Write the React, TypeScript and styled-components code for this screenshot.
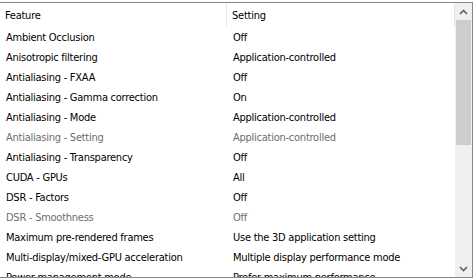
import React from "react";
import styled, { createGlobalStyle } from "styled-components";

const Global = createGlobalStyle`
  html, body { margin: 0; padding: 0; background: #ffffff; }
  body { width: 474px; height: 280px; overflow: hidden; }
`;

const Frame = styled.div`
  box-sizing: border-box;
  width: 474px;
  height: 276px;
  margin: 2px 0 0 -1px;
  border: 1px solid #828790;
  background: #ffffff;
  display: flex;
  overflow: hidden;
  font-family: "DejaVu Sans Condensed", "DejaVu Sans", sans-serif;
  font-stretch: condensed;
  font-size: 11px;
  letter-spacing: -0.25px;
  color: #000000;
`;

const ListArea = styled.div`
  flex: 1;
  display: flex;
  flex-direction: column;
  overflow: hidden;
`;

const HeaderRow = styled.div`
  display: grid;
  grid-template-columns: 227px 228px;
  height: 24px;
  flex-shrink: 0;
`;

const HeaderCell = styled.div`
  display: flex;
  align-items: center;
  padding-left: ${(p: { $pad: number }) => p.$pad}px;
  border-right: 1px solid #e5e5e5;
  margin: 1px 0;
`;

const Row = styled.div`
  display: grid;
  grid-template-columns: 227px 228px;
  height: 20px;
  flex-shrink: 0;
  color: ${(p: { $disabled?: boolean }) => (p.$disabled ? "#6d6d6d" : "#000000")};
`;

const Cell = styled.div`
  display: flex;
  align-items: center;
  padding-left: ${(p: { $pad: number }) => p.$pad}px;
  white-space: nowrap;
`;

const ScrollBar = styled.div`
  width: 17px;
  flex-shrink: 0;
  background: #f0f0f0;
  display: flex;
  flex-direction: column;
`;

const ArrowButton = styled.div`
  height: 17px;
  display: flex;
  align-items: center;
  justify-content: center;
  flex-shrink: 0;
`;

const Track = styled.div`
  flex: 1;
  display: flex;
  flex-direction: column;
  padding: 0 1px;
`;

const Thumb = styled.div`
  height: 125px;
  background: #cdcdcd;
`;

const rows: { f: string; s: string; d?: boolean }[] = [
  { f: "Ambient Occlusion", s: "Off" },
  { f: "Anisotropic filtering", s: "Application-controlled" },
  { f: "Antialiasing - FXAA", s: "Off" },
  { f: "Antialiasing - Gamma correction", s: "On" },
  { f: "Antialiasing - Mode", s: "Application-controlled" },
  { f: "Antialiasing - Setting", s: "Application-controlled", d: true },
  { f: "Antialiasing - Transparency", s: "Off" },
  { f: "CUDA - GPUs", s: "All" },
  { f: "DSR - Factors", s: "Off" },
  { f: "DSR - Smoothness", s: "Off", d: true },
  { f: "Maximum pre-rendered frames", s: "Use the 3D application setting" },
  { f: "Multi-display/mixed-GPU acceleration", s: "Multiple display performance mode" },
  { f: "Power management mode", s: "Prefer maximum performance" },
];

const Chevron = ({ up }: { up?: boolean }) => (
  <svg width="9" height="6" viewBox="0 0 9 6">
    <path
      d={up ? "M1 5 L4.5 1.5 L8 5" : "M1 1 L4.5 4.5 L8 1"}
      fill="none"
      stroke="#606060"
      strokeWidth="1.6"
    />
  </svg>
);

export default function App() {
  return (
    <>
      <Global />
      <Frame>
        <ListArea>
          <HeaderRow>
            <HeaderCell $pad={5}>Feature</HeaderCell>
            <HeaderCell $pad={5}>Setting</HeaderCell>
          </HeaderRow>
          {rows.map((r) => (
            <Row key={r.f} $disabled={r.d}>
              <Cell $pad={6}>{r.f}</Cell>
              <Cell $pad={6}>{r.s}</Cell>
            </Row>
          ))}
        </ListArea>
        <ScrollBar>
          <ArrowButton>
            <Chevron up />
          </ArrowButton>
          <Track>
            <Thumb />
          </Track>
          <ArrowButton>
            <Chevron />
          </ArrowButton>
        </ScrollBar>
      </Frame>
    </>
  );
}
